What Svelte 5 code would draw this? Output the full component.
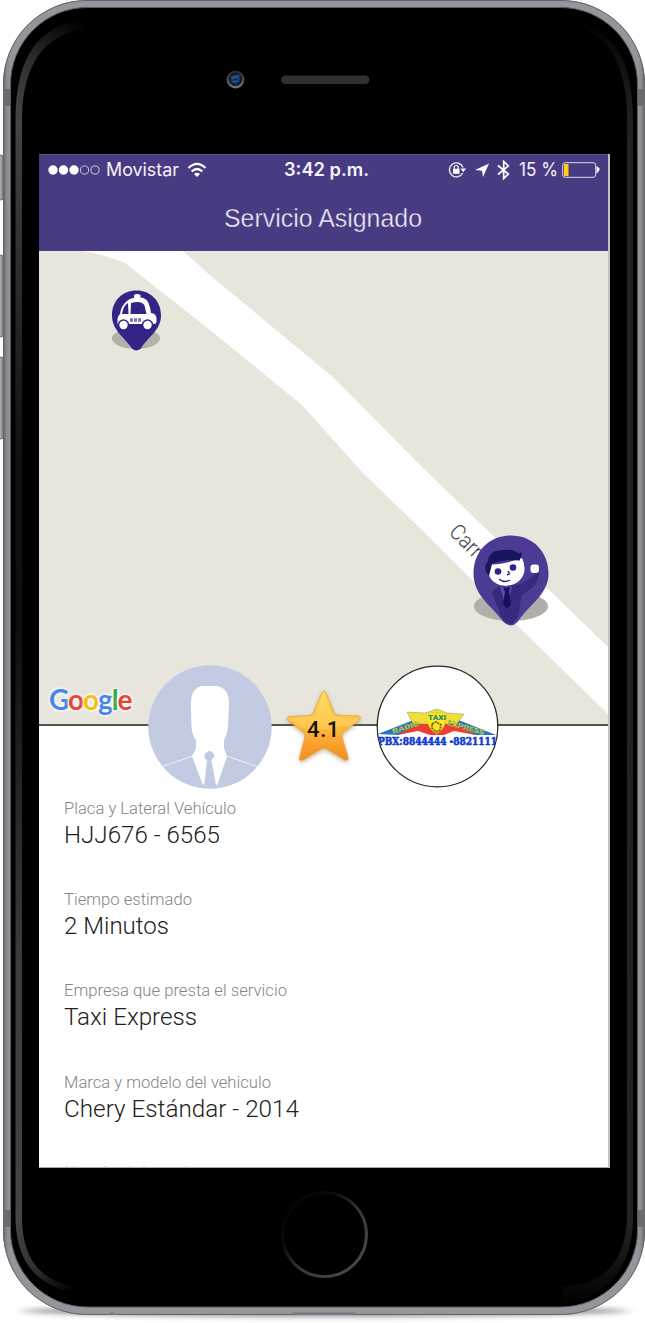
<script>
  const details = [
    { label: 'Placa y Lateral Vehículo', value: 'HJJ676 - 6565', lw: 172, vw: 156 },
    { label: 'Tiempo estimado', value: '2 Minutos', lw: 128, vw: 105 },
    { label: 'Empresa que presta el servicio', value: 'Taxi Express', lw: 223, vw: 133 },
    { label: 'Marca y modelo del vehiculo', value: 'Chery Estándar - 2014', lw: 207, vw: 235 }
  ];
</script>

<div class="phone">
  <svg class="body" viewBox="0 0 645 1323" width="645" height="1323" aria-hidden="true">
    <defs>
      <linearGradient id="side" x1="0" x2="1" y1="0" y2="0">
        <stop offset="0" stop-color="#626166" /><stop offset=".006" stop-color="#8c8b91" /><stop offset=".0125" stop-color="#96959b" />
        <stop offset=".9875" stop-color="#96959b" /><stop offset=".994" stop-color="#8c8b91" /><stop offset="1" stop-color="#626166" />
      </linearGradient>
      <linearGradient id="btn" x1="0" x2="1"><stop offset="0" stop-color="#aeb1b4" /><stop offset=".5" stop-color="#b9bcc0" /><stop offset="1" stop-color="#66686c" /></linearGradient>
      <linearGradient id="shineTop" gradientUnits="userSpaceOnUse" x1="80" y1="20" x2="17" y2="120"><stop offset="0" stop-color="#000" /><stop offset=".55" stop-color="#303030" /><stop offset="1" stop-color="#454545" /></linearGradient>
      <linearGradient id="shineLeft" gradientUnits="userSpaceOnUse" x1="0" y1="118" x2="0" y2="1240"><stop offset="0" stop-color="#454545" /><stop offset=".3" stop-color="#111" /><stop offset=".45" stop-color="#0e0e0e" /><stop offset=".75" stop-color="#3c3c3c" /><stop offset="1" stop-color="#454545" /></linearGradient>
      <linearGradient id="shineRight" gradientUnits="userSpaceOnUse" x1="0" y1="20" x2="0" y2="1310"><stop offset="0" stop-color="#000" /><stop offset=".06" stop-color="#1c1c1c" /><stop offset=".1" stop-color="#232323" /><stop offset=".93" stop-color="#242424" /><stop offset=".99" stop-color="#040404" /><stop offset="1" stop-color="#000" /></linearGradient>
      <linearGradient id="shineBot" gradientUnits="userSpaceOnUse" x1="18" y1="1220" x2="75" y2="1290"><stop offset="0" stop-color="#454545" /><stop offset=".5" stop-color="#333" /><stop offset="1" stop-color="#000" /></linearGradient>
      <linearGradient id="home" x1="0" y1="0" x2="1" y2="1"><stop offset="0" stop-color="#000" /><stop offset=".3" stop-color="#060a0e" /><stop offset=".55" stop-color="#30363c" /><stop offset="1" stop-color="#4c5157" /></linearGradient>
      <radialGradient id="lens"><stop offset="0" stop-color="#0b1524" /><stop offset=".45" stop-color="#1c4a80" /><stop offset=".75" stop-color="#0c2748" /><stop offset="1" stop-color="#06080e" /></radialGradient>
      <linearGradient id="ring" x1="0" y1="0" x2="0" y2="1"><stop offset="0" stop-color="#26262a" /><stop offset="1" stop-color="#77777b" /></linearGradient>
      <filter id="soft" x="-20%" y="-200%" width="140%" height="500%"><feGaussianBlur stdDeviation="7 2.5" /></filter>
    </defs>
    <ellipse cx="325" cy="1311" rx="302" ry="6" fill="#666" opacity=".65" filter="url(#soft)" />
    <rect x="-5" y="155" width="9" height="45" rx="3" fill="url(#btn)" stroke="#626469" stroke-width=".8" />
    <rect x="-5" y="255" width="9" height="82" rx="3" fill="url(#btn)" stroke="#626469" stroke-width=".8" />
    <rect x="-5" y="357" width="9" height="82" rx="3" fill="url(#btn)" stroke="#626469" stroke-width=".8" />
    <rect x="3" y="0" width="642" height="1315" rx="84" fill="url(#side)" />
    <rect x="3.5" y=".5" width="641" height="1314" rx="83.5" fill="none" stroke="#656469" />
    <path d="M3 89h8v17H3zM637 89h8v17h-8zM3 1210h8v17H3zM637 1210h8v17h-8z" fill="#6b6a6f" />
    <path d="M107 1315q4-5 12 0zM291 1312.5h66l-5 2.5h-56z" fill="#777984" />
    <rect x="10.5" y="7.5" width="627" height="1299.500" rx="77" fill="#000" stroke="#59595c" />
    <path d="M85 20C38 24 16 58 15.500 118h6.500C23 66 42 36 85 28z" fill="url(#shineTop)" />
    <rect x="15.500" y="118" width="6.500" height="1102" fill="url(#shineLeft)" />
    <path d="M15.500 1220C17 1264 38 1289 84 1294v-6C43 1284 23 1262 22 1220z" fill="url(#shineBot)" />
    <path d="M563 20c49 4 70 38 70 98v1100c0 50-27 80-70 86v-17c39-2 63-24 64-69V118c0-55-19-88-64-96z" fill="url(#shineRight)" />
    <circle cx="235.500" cy="79.500" r="9" fill="url(#ring)" /><circle cx="235.500" cy="79.300" r="6.500" fill="url(#lens)" />
    <path d="m231 77 4 1 4-3m-6 7 4-1" stroke="#2f659f" stroke-width="1.200" fill="none" />
    <rect x="281" y="75.500" width="88.500" height="8.500" rx="4.250" fill="#303031" />
    <circle cx="324.500" cy="1234.500" r="42" fill="none" stroke="url(#home)" stroke-width="3" />
  </svg>

  <main class="screen">
    <header>
      <div class="status">
        <div class="carrier">
          <svg width="52" height="12" viewBox="0 0 52 12"><g fill="#fff"><circle cx="5" cy="6" r="4.700" /><circle cx="15.500" cy="6" r="4.700" /><circle cx="26" cy="6" r="4.700" /></g><g fill="none" stroke="#d0cae6" stroke-width="1"><circle cx="36.500" cy="6" r="4.100" /><circle cx="47" cy="6" r="4.100" /></g></svg>
          <svg class="movistar" width="77" height="24"><text x="1" y="18" textLength="73" lengthAdjust="spacingAndGlyphs">Movistar</text></svg>
          <svg width="20" height="16" viewBox="0 0 20 16"><g fill="none" stroke="#fff" stroke-width="2.200"><path d="M1.500 6q8.500-8.300 17 0M4.700 9.500q5.300-5 10.600 0" /></g><path d="M7 11.900q3-2.400 6 0L10 15z" fill="#fff" /></svg>
        </div>
        <svg class="time" width="88" height="24"><text x="1" y="18" textLength="85" lengthAdjust="spacingAndGlyphs">3:42 p.m.</text></svg>
        <div class="indicators">
          <svg width="18" height="18" viewBox="0 0 18 18"><path d="M14.700 12A7 7 0 1 1 15 6.500" fill="none" stroke="#e9e6f4" stroke-width="1.400" /><path d="m12.500 7.500 5.500 0-2.700 3.700z" fill="#fff" /><rect x="5" y="7.800" width="6.500" height="5" fill="#fff" /><path d="M6.200 8V6.500a2 2 0 0 1 4 0V8" fill="none" stroke="#fff" stroke-width="1.200" /></svg>
          <svg class="arrow" width="14" height="15" viewBox="0 0 14 15"><path d="M0 7 14 .500 8 14 7 7.800z" fill="#fff" /></svg>
          <svg class="bt" width="13" height="20" viewBox="0 0 13 20"><path d="M1 5.500 11.300 14 6.700 18.500V1.500L11.300 6 1 14.500" fill="none" stroke="#fff" stroke-width="1.700" /></svg>
          <svg class="pct" width="42" height="24"><text x="0" y="18" textLength="39" lengthAdjust="spacingAndGlyphs">15 %</text></svg>
          <svg width="39" height="16" viewBox="0 0 39 16"><rect x=".700" y=".700" width="33" height="14.600" rx="2.500" fill="none" stroke="#ddd8ee" /><path d="M2 2h4.500v12H2z" fill="#ffcf0a" /><path d="M34.500 4q4 2.500 3 4t-3 4z" fill="#fff" /></svg>
        </div>
      </div>
      <svg class="title" width="206" height="34"><text x="3" y="25" textLength="198" lengthAdjust="spacingAndGlyphs">Servicio Asignado</text></svg>
    </header>

    <section class="map">
      <svg class="streets" width="570" height="474" viewBox="39 251 570 474" aria-hidden="true">
        <path d="M82 251h101q11 9 22 20l130 108 85 86 189 183v67l-83-81-98-98-66-64-60-67L210 330l-85-67q-22-9-43-12z" fill="#fff" />
        <text class="street" x="0" y="0" transform="translate(448 533) rotate(45)" textLength="37" lengthAdjust="spacingAndGlyphs">Carr</text>
        <g>
          <path d="M136 330c-15-1-25 3-24 9s12 10 24 10 23-4 24-10-9-10-24-9z" fill="#b5b1aa" />
          <path d="M136.500 290.500c-14 0-24.500 10-24.500 25 0 15 12 21 20 33q4 4 9 0c7-12 20-18 20-33 0-15-11-25-24.500-25z" fill="#352486" />
          <path d="M117.500 324v-5q0-3 2.500-5 1-8 6-12 4-4 8-4v-3q3-2 6.500 0v2.500q6 .5 8 5.500 2 5 2.500 10 5 .5 5.500 5v3.500q0 2.500-3 2.500h-33q-3 0-3 0z" fill="#fff" />
          <path d="M128 303q-5 3-6 11h6.500zM131 303q11-3 13.500 2.500l2 8.500h-16z" fill="#352486" />
          <g fill="#fff" stroke="#352486" stroke-width="1.600"><circle cx="123.500" cy="325" r="5" /><circle cx="147.500" cy="325" r="5" /></g>
          <path d="M130 320h12" stroke="#8175b8" stroke-width="3.500" stroke-dasharray="3 1" />
        </g>
        <g>
          <path d="M511 593c-23-1-38 6-37 14s18 14 37 14 36-6 37-14-14-15-37-14z" fill="#b2afab" />
          <path d="M511 535.500c-22 0-37.500 16-37.500 38 0 22 18 32 30 48.500q7 7 14 0c11-17 31-27 31-48.500 0-22-16-38-37.500-38z" fill="#4b3b94" />
          <path d="M492 592q4-5 12-7h10q10-1 18-8t1.500-9l6-1q1 15-9 22l-9 6-3 20q-8 18-18 0z" fill="#352a7d" />
          <path d="m500 587 6-2 6 2-6 20z" fill="#614caa" /><path d="m503 586 3 2 4-2-1 6 2 12-4 5-4-5 2-12z" fill="#17105c" />
          <path d="M488 564q12 2 34-6 6 13-2 22c-10 10-29 7-32-8z" fill="#fff" />
          <path d="M489 576q-7-8-1-15 1-10 11-10.500 13-2 18 2 4 2 4-1 2 4-1 7v2l-9-.5q-12 1-19 4z" fill="#17165e" />
          <circle cx="498" cy="571.500" r="3.300" fill="#36208a" /><circle cx="513" cy="567.500" r="3.300" fill="#36208a" />
          <path d="m508 571 1.500 3-2.500 1m-8 4q5 4.500 11 1" stroke="#36208a" stroke-width="1.400" fill="none" />
          <rect x="530.500" y="564.500" width="8.500" height="8.500" rx="3" fill="#fff" />
        </g>
      </svg>
      <div class="google" aria-label="Google"><span class="b">G</span><span class="r">o</span><span class="y">o</span><span class="b">g</span><span class="g">l</span><span class="r">e</span></div>

      <div class="badges">
        <svg width="124" height="124" viewBox="0 0 124 124">
          <defs><clipPath id="face"><circle cx="62" cy="62" r="61.500" /></clipPath></defs>
          <circle cx="62" cy="62" r="61.700" fill="#c2cbe1" />
          <g clip-path="url(#face)">
            <path d="M54 21h15q12 2 12 18l-1 23q-1 8-4 13v8q2 5 3 9l-3 8-6 18-1 2q-7-2-13 0l-2-2-7-19-3-8q3-5 4-8v-8q-4-5-4.500-13l-.700-22q0-17 11.200-19z" fill="#fff" />
            <path d="m57 89 2-2q2-2 5 0 4 3 1 6l-1.500 2 5 28H56l3-28q-4-2-2-6z" fill="#c2cbe1" />
            <path d="m45 91-31 10.500m65-10.500 31 11M48 95l7 3m22-7-10 7" stroke="#fff" stroke-width=".900" opacity=".8" />
          </g>
        </svg>
        <div class="rating">
          <svg width="82" height="84" viewBox="0 0 82 84">
            <defs><linearGradient id="gold" x1="0" y1="0" x2="0" y2="1"><stop offset="0" stop-color="#ffdb58" /><stop offset=".5" stop-color="#ffba3c" /><stop offset="1" stop-color="#f58b20" /></linearGradient></defs>
            <path class="star" d="M41 6q1.500 0 2 2l8 20q1 2 3 2l21.500 1q3.500 1 1 3.500L60 48q-2 2-1 4l6 20q.5 4-3 3L43.500 64q-2.500-1.500-5 0L20 75q-4 1.500-3.500-2L22 52q.5-2-1-4L5 35q-2-3 1.500-3.500l20-1q3 0 4-3l8-19q1-2 2.500-2z" fill="url(#gold)" stroke="#e2a443" stroke-width=".800" />
            <path d="m41 9-8 20q-1 2-4 2L7 33.500l12 9q20 5 52-3l5-5-24-3q-3-1-4-4z" fill="#fff28b" opacity=".24" />
          </svg>
          <b>4.1</b>
        </div>
        <svg class="company" width="123" height="123" viewBox="0 0 123 123">
          <defs><clipPath id="co"><circle cx="61.500" cy="61.500" r="60" /></clipPath></defs>
          <circle cx="61.500" cy="61.500" r="60.300" fill="#fff" stroke="#262626" stroke-width="1.300" />
          <g clip-path="url(#co)">
            <path d="M2 69 40 54h40l40 16h-20l-22-5-17 5-19-5-20 5z" fill="#2476c9" />
            <path d="m21 70 22-11 18-3 19 3 20 11-22-4-10 4H54l-12-4z" fill="#ed3d35" />
            <path d="m31 47 18 1 12-4 10 4 17 1-7 10H37z" fill="#f0df34" stroke="#777" stroke-width=".400" />
            <path d="M50 48h21q0 15-10.500 21Q50 63 50 48z" fill="#ffe71d" stroke="#cfba25" stroke-width=".500" />
            <path d="m56 59 4-2 5 3-1 5-4 2-4-4z" fill="none" stroke="#6c5a18" stroke-width="1.800" stroke-dasharray="2 1" />
            <text x="52" y="55" class="taxi" textLength="18" lengthAdjust="spacingAndGlyphs">TAXI</text>
            <text class="name" textLength="28" lengthAdjust="spacingAndGlyphs" transform="translate(17 69) rotate(-18)">RADIO</text>
            <text class="name" textLength="38" lengthAdjust="spacingAndGlyphs" transform="translate(71 60) rotate(15)">EXPRESS</text>
            <text class="phone-no" x="2" y="79.500" textLength="119" lengthAdjust="spacingAndGlyphs">PBX:8844444 -8821111</text>
          </g>
        </svg>
      </div>
    </section>

    <section class="details">
      {#each details as d}
        <article>
          <svg class="label" width="300" height="24"><text x="0" y="17" textLength={d.lw} lengthAdjust="spacingAndGlyphs">{d.label}</text></svg>
          <svg class="value" width="300" height="34"><text x="0" y="22" textLength={d.vw} lengthAdjust="spacingAndGlyphs">{d.value}</text></svg>
        </article>
      {/each}
      <svg class="next" width="140" height="3" viewBox="0 0 140 3" aria-hidden="true"><path d="M1 2h3m5 0h2M40 2h3m22 0h2m12 0h2m40 0h2" stroke="#bbb" stroke-width="1.200" /></svg>
    </section>
  </main>
</div>

<style>
  :global(body) { margin: 0; background: #fff; }
  svg { display: block; flex: none; }
  .phone { position: relative; box-sizing: border-box; width: 645px; height: 1323px; padding: 154px 35px 155px 39px; overflow: hidden; font-family: Roboto, sans-serif; }
  .body { position: absolute; inset: 0; }
  .screen { position: relative; box-sizing: border-box; display: flex; flex-direction: column; width: 571px; height: 1014px; overflow: hidden; background: #fff; border-right: 2px solid #c3c1c9; border-bottom: 1.5px solid #aaa; }
  header { height: 97px; flex: none; background: #493b82; display: flex; flex-direction: column; align-items: center; border-top: 1px solid #5d5093; box-sizing: border-box; }
  .status { width: 100%; height: 30px; display: grid; grid-template-columns: 1fr 88px 1fr; align-items: center; box-sizing: border-box; padding: 0 7px 0 9px; fill: #f5f3fb; }
  .carrier, .indicators { display: flex; align-items: center; }
  .carrier { gap: 5px; }
  .indicators { justify-content: flex-end; }
  .time { margin-left: 2px; }
  .arrow { margin-left: 9px; }
  .bt { margin-left: 8px; }
  .pct { margin: 0 1px 0 9px; }
  .movistar, .pct { font: 400 18px Inter, sans-serif; }
  .time { font: 600 18px Inter, sans-serif; }
  .title { margin-top: 17px; overflow: visible; font: 400 25.5px "Liberation Sans", sans-serif; fill: #f6f3fd; stroke: #493b82; stroke-width: .45px; }
  .map { position: relative; height: 475px; flex: none; box-sizing: border-box; background: #e8e5dd; border-bottom: 2px solid #555350; }
  .streets { position: absolute; inset: 0; }
  .street { font: 300 22px Roboto, sans-serif; fill: #444; }
  .google { position: absolute; left: 10px; top: 430px; font: 700 28px/36px Lato, sans-serif; letter-spacing: -1.1px; text-shadow: 0 0 2px #fff, 0 0 3px #fff, 0 0 4px #fff; }
  .b { color: #4486ed; } .r { color: #e64538; } .y { color: #f6bd11; } .g { color: #34a853; }
  .badges { position: absolute; left: 108.5px; top: 413.5px; display: flex; align-items: center; }
  .rating { position: relative; display: grid; place-items: center; margin: 0 11px; }
  .rating > * { grid-area: 1 / 1; }
  .rating b { z-index: 1; font: 500 22px Roboto, sans-serif; letter-spacing: .6px; color: #17120a; padding-top: 5px; }
  .star { filter: drop-shadow(0 2px 2px #775e2866); }
  .taxi { font: 900 7px Roboto, sans-serif; fill: #168a80; }
  .name { font: 900 7px Roboto, sans-serif; fill: #d6dd38; stroke: #4b7b5d; stroke-width: .2; }
  .phone-no { font: 700 11px "DejaVu Serif", serif; fill: #123bd3; stroke: #123bd3; stroke-width: .6; }
  .details { padding: 71px 25px 0 24.500px; display: flex; flex-direction: column; }
  article { height: 91.2px; flex: none; }
  .label { font: 300 17px Roboto, sans-serif; fill: #858585; }
  .value { font: 300 24.500px Roboto, sans-serif; fill: #222; }
  .next { margin-top: 3.4px; }
</style>
